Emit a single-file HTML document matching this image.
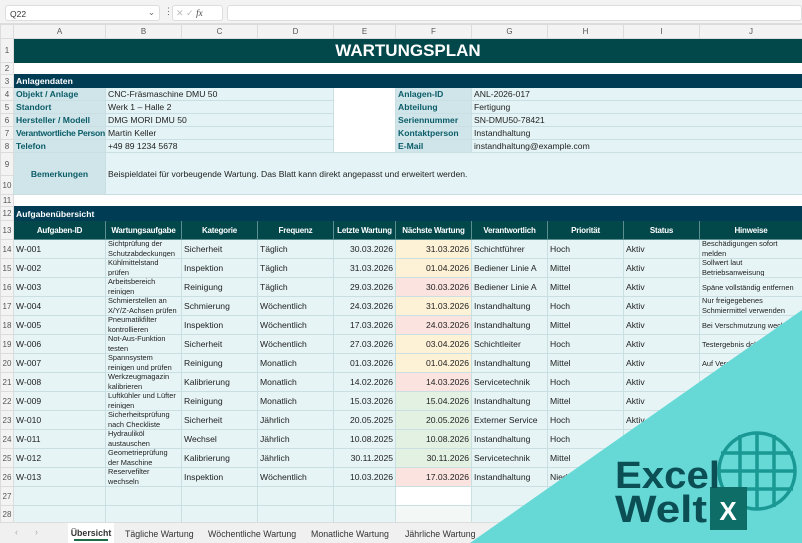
<!DOCTYPE html>
<html><head><meta charset="utf-8"><style>
*{margin:0;padding:0;box-sizing:border-box}
body{width:802px;height:543px;overflow:hidden;background:#fff;font-family:"Liberation Sans",sans-serif;position:relative}
#fb{position:absolute;left:0;top:0;width:802px;height:24px;background:#f3f3f3;border-bottom:1px solid #ddd}
table{position:absolute;left:0;top:24px;border-collapse:collapse;table-layout:fixed;width:802px}
td{border:1px solid #c9dfe2;font-size:8.6px;color:#222;padding:0 2px;white-space:nowrap;overflow:hidden;vertical-align:middle}
td.rh{background:#f3f3f3;color:#555;font-size:8px;text-align:center;border-color:#dcdcdc;padding:0}
tr.ch td{background:#f3f3f3;color:#555;font-size:8px;text-align:center;border-color:#dcdcdc}
.lb{background:#cfe5e9;color:#0b5c68;font-weight:bold}
.vl{background:#e4f3f5}
.hd{background:#02474a;color:#fff;font-weight:bold;text-align:center;border-color:#5a8e90;font-size:8px;letter-spacing:-0.2px}
.d{background:#e6f4f5}
.r{text-align:right}
.y{background:#fdf1d6}.p{background:#fbe3df}.g{background:#e3f1e3}
.two div{font-size:7.4px;line-height:10px;height:18px;overflow:hidden;white-space:normal;margin-top:-2px}
.sm{font-size:7.4px}
</style></head><body>
<div id="fb">
<div style="position:absolute;left:5px;top:5px;width:155px;height:16px;background:#fff;border:1px solid #ddd;border-radius:3px;font-size:8.5px;padding:3px 4px;color:#333">Q22<span style="position:absolute;right:4px;top:1px;color:#666">⌄</span></div>
<div style="position:absolute;left:164px;top:6px;color:#666;font-size:9px">⋮</div>
<div style="position:absolute;left:172px;top:5px;width:51px;height:16px;background:#fff;border:1px solid #ddd;border-radius:3px;font-size:9px;color:#bbb;padding:2px 3px">✕ ✓ <i style="color:#444;font-family:'Liberation Serif',serif">fx</i></div>
<div style="position:absolute;left:227px;top:5px;width:575px;height:16px;background:#fff;border:1px solid #ddd;border-radius:3px"></div>
</div>
<table>
<colgroup><col style="width:13px"><col style="width:92px"><col style="width:76px"><col style="width:76px"><col style="width:76px"><col style="width:62px"><col style="width:76px"><col style="width:76px"><col style="width:76px"><col style="width:76px"><col style="width:103px"></colgroup>
<tr class="ch" style="height:14px"><td></td><td>A</td><td>B</td><td>C</td><td>D</td><td>E</td><td>F</td><td>G</td><td>H</td><td>I</td><td>J</td></tr>
<tr style="height:24px"><td class="rh">1</td><td colspan="10" style="background:#02474a;color:#fff;font-weight:bold;font-size:17px;text-align:center;border-color:#02474a">WARTUNGSPLAN</td></tr>
<tr style="height:12px"><td class="rh">2</td><td colspan="10" style="border:none"></td></tr>
<tr style="height:13px"><td class="rh">3</td><td colspan="10" style="background:#003d55;color:#fff;font-weight:bold;border-color:#003d55">Anlagendaten</td></tr>
<tr style="height:13px"><td class="rh">4</td><td class="lb">Objekt / Anlage</td><td class="vl" colspan="3">CNC-Fräsmaschine DMU 50</td><td rowspan="5" style="background:#fff"></td><td class="lb">Anlagen-ID</td><td class="vl" colspan="4">ANL-2026-017</td></tr>
<tr style="height:13px"><td class="rh">5</td><td class="lb">Standort</td><td class="vl" colspan="3">Werk 1 – Halle 2</td><td class="lb">Abteilung</td><td class="vl" colspan="4">Fertigung</td></tr>
<tr style="height:13px"><td class="rh">6</td><td class="lb">Hersteller / Modell</td><td class="vl" colspan="3">DMG MORI DMU 50</td><td class="lb">Seriennummer</td><td class="vl" colspan="4">SN-DMU50-78421</td></tr>
<tr style="height:13px"><td class="rh">7</td><td class="lb" style="letter-spacing:-0.3px">Verantwortliche Person</td><td class="vl" colspan="3">Martin Keller</td><td class="lb">Kontaktperson</td><td class="vl" colspan="4">Instandhaltung</td></tr>
<tr style="height:13px"><td class="rh">8</td><td class="lb">Telefon</td><td class="vl" colspan="3">+49 89 1234 5678</td><td class="lb">E-Mail</td><td class="vl" colspan="4">instandhaltung@example.com</td></tr>
<tr style="height:23px"><td class="rh">9</td><td class="lb" rowspan="2" style="text-align:center">Bemerkungen</td><td class="vl" colspan="9" rowspan="2">Beispieldatei für vorbeugende Wartung. Das Blatt kann direkt angepasst und erweitert werden.</td></tr>
<tr style="height:19px"><td class="rh">10</td></tr>
<tr style="height:12px"><td class="rh">11</td><td colspan="10" style="border:none"></td></tr>
<tr style="height:14px"><td class="rh">12</td><td colspan="10" style="background:#003d55;color:#fff;font-weight:bold;border-color:#003d55">Aufgabenübersicht</td></tr>
<tr style="height:19px"><td class="rh">13</td><td class="hd">Aufgaben-ID</td><td class="hd">Wartungsaufgabe</td><td class="hd">Kategorie</td><td class="hd">Frequenz</td><td class="hd">Letzte Wartung</td><td class="hd">Nächste Wartung</td><td class="hd">Verantwortlich</td><td class="hd">Priorität</td><td class="hd">Status</td><td class="hd">Hinweise</td></tr>
<tr style="height:19px"><td class="rh">14</td><td class="d">W-001</td><td class="d two"><div>Sichtprüfung der Schutzabdeckungen</div></td><td class="d">Sicherheit</td><td class="d">Täglich</td><td class="d r">30.03.2026</td><td class="y r">31.03.2026</td><td class="d">Schichtführer</td><td class="d">Hoch</td><td class="d">Aktiv</td><td class="d two"><div>Beschädigungen sofort melden</div></td></tr>
<tr style="height:19px"><td class="rh">15</td><td class="d">W-002</td><td class="d two"><div>Kühlmittelstand prüfen</div></td><td class="d">Inspektion</td><td class="d">Täglich</td><td class="d r">31.03.2026</td><td class="y r">01.04.2026</td><td class="d">Bediener Linie A</td><td class="d">Mittel</td><td class="d">Aktiv</td><td class="d two"><div>Sollwert laut Betriebsanweisung</div></td></tr>
<tr style="height:19px"><td class="rh">16</td><td class="d">W-003</td><td class="d two"><div>Arbeitsbereich reinigen</div></td><td class="d">Reinigung</td><td class="d">Täglich</td><td class="d r">29.03.2026</td><td class="p r">30.03.2026</td><td class="d">Bediener Linie A</td><td class="d">Mittel</td><td class="d">Aktiv</td><td class="d sm">Späne vollständig entfernen</td></tr>
<tr style="height:19px"><td class="rh">17</td><td class="d">W-004</td><td class="d two"><div>Schmierstellen an X/Y/Z-Achsen prüfen</div></td><td class="d">Schmierung</td><td class="d">Wöchentlich</td><td class="d r">24.03.2026</td><td class="y r">31.03.2026</td><td class="d">Instandhaltung</td><td class="d">Hoch</td><td class="d">Aktiv</td><td class="d two"><div>Nur freigegebenes Schmiermittel verwenden</div></td></tr>
<tr style="height:19px"><td class="rh">18</td><td class="d">W-005</td><td class="d two"><div>Pneumatikfilter kontrollieren</div></td><td class="d">Inspektion</td><td class="d">Wöchentlich</td><td class="d r">17.03.2026</td><td class="p r">24.03.2026</td><td class="d">Instandhaltung</td><td class="d">Mittel</td><td class="d">Aktiv</td><td class="d sm">Bei Verschmutzung wechseln</td></tr>
<tr style="height:19px"><td class="rh">19</td><td class="d">W-006</td><td class="d two"><div>Not-Aus-Funktion testen</div></td><td class="d">Sicherheit</td><td class="d">Wöchentlich</td><td class="d r">27.03.2026</td><td class="y r">03.04.2026</td><td class="d">Schichtleiter</td><td class="d">Hoch</td><td class="d">Aktiv</td><td class="d sm">Testergebnis dokumentieren</td></tr>
<tr style="height:19px"><td class="rh">20</td><td class="d">W-007</td><td class="d two"><div>Spannsystem reinigen und prüfen</div></td><td class="d">Reinigung</td><td class="d">Monatlich</td><td class="d r">01.03.2026</td><td class="y r">01.04.2026</td><td class="d">Instandhaltung</td><td class="d">Mittel</td><td class="d">Aktiv</td><td class="d sm">Auf Verschleiß prüfen</td></tr>
<tr style="height:19px"><td class="rh">21</td><td class="d">W-008</td><td class="d two"><div>Werkzeugmagazin kalibrieren</div></td><td class="d">Kalibrierung</td><td class="d">Monatlich</td><td class="d r">14.02.2026</td><td class="p r">14.03.2026</td><td class="d">Servicetechnik</td><td class="d">Hoch</td><td class="d">Aktiv</td><td class="d sm">Protokoll</td></tr>
<tr style="height:19px"><td class="rh">22</td><td class="d">W-009</td><td class="d two"><div>Luftkühler und Lüfter reinigen</div></td><td class="d">Reinigung</td><td class="d">Monatlich</td><td class="d r">15.03.2026</td><td class="g r">15.04.2026</td><td class="d">Instandhaltung</td><td class="d">Mittel</td><td class="d">Aktiv</td><td class="d"></td></tr>
<tr style="height:19px"><td class="rh">23</td><td class="d">W-010</td><td class="d two"><div>Sicherheitsprüfung nach Checkliste</div></td><td class="d">Sicherheit</td><td class="d">Jährlich</td><td class="d r">20.05.2025</td><td class="g r">20.05.2026</td><td class="d">Externer Service</td><td class="d">Hoch</td><td class="d">Aktiv</td><td class="d"></td></tr>
<tr style="height:19px"><td class="rh">24</td><td class="d">W-011</td><td class="d two"><div>Hydrauliköl austauschen</div></td><td class="d">Wechsel</td><td class="d">Jährlich</td><td class="d r">10.08.2025</td><td class="g r">10.08.2026</td><td class="d">Instandhaltung</td><td class="d">Hoch</td><td class="d"></td><td class="d"></td></tr>
<tr style="height:19px"><td class="rh">25</td><td class="d">W-012</td><td class="d two"><div>Geometrieprüfung der Maschine</div></td><td class="d">Kalibrierung</td><td class="d">Jährlich</td><td class="d r">30.11.2025</td><td class="g r">30.11.2026</td><td class="d">Servicetechnik</td><td class="d">Mittel</td><td class="d"></td><td class="d"></td></tr>
<tr style="height:19px"><td class="rh">26</td><td class="d">W-013</td><td class="d two"><div>Reservefilter wechseln</div></td><td class="d">Inspektion</td><td class="d">Wöchentlich</td><td class="d r">10.03.2026</td><td class="p r">17.03.2026</td><td class="d">Instandhaltung</td><td class="d">Niedrig</td><td class="d"></td><td class="d"></td></tr>
<tr style="height:19px"><td class="rh">27</td><td class="d"></td><td class="d"></td><td class="d"></td><td class="d"></td><td class="d"></td><td style="background:#fff"></td><td class="d"></td><td class="d"></td><td class="d"></td><td class="d"></td></tr>
<tr style="height:17px"><td class="rh">28</td><td class="d"></td><td class="d"></td><td class="d"></td><td class="d"></td><td class="d"></td><td style="background:#f3f8f6"></td><td class="d"></td><td class="d"></td><td class="d"></td><td class="d"></td></tr>
</table>
<div style="position:absolute;left:0;top:522px;width:802px;height:21px;background:#f0f0f0;border-top:1px solid #ddd;font-size:8.8px;color:#333">
<span style="position:absolute;left:15px;top:4px;color:#aaa">‹</span><span style="position:absolute;left:35px;top:4px;color:#aaa">›</span>
<div style="position:absolute;left:68px;top:0;width:46px;height:20px;background:#fff;font-weight:bold;text-align:center;padding-top:5px">Übersicht<div style="position:absolute;left:6px;right:6px;bottom:2px;height:2px;background:#1e6b4a"></div></div>
<span style="position:absolute;left:125px;top:6px">Tägliche Wartung</span>
<span style="position:absolute;left:208px;top:6px">Wöchentliche Wartung</span>
<span style="position:absolute;left:311px;top:6px">Monatliche Wartung</span>
<span style="position:absolute;left:405px;top:6px">Jährliche Wartung</span>
</div>
<svg style="position:absolute;left:0;top:0" width="802" height="543">
<polygon points="802,310 802,543 470,543" fill="#66d9d7"/>
<g fill="none" stroke="#1a9994" stroke-width="3.5">
<circle cx="757" cy="471" r="38"/>
<line x1="740" y1="435" x2="740" y2="507"/><line x1="757" y1="433" x2="757" y2="509"/><line x1="774" y1="435" x2="774" y2="507"/>
<line x1="721" y1="453" x2="793" y2="453"/><line x1="719" y1="471" x2="795" y2="471"/><line x1="721" y1="489" x2="793" y2="489"/>
</g>
<rect x="710" y="487" width="37" height="43" fill="#0e6d67"/>
<text x="728" y="520" font-family="Liberation Sans" font-weight="bold" font-size="26" fill="#fff" text-anchor="middle">X</text>
<text x="615" y="488" font-family="Liberation Sans" font-weight="bold" font-size="38" fill="#0b4f55" textLength="105" lengthAdjust="spacingAndGlyphs">Excel</text>
<text x="615" y="522" font-family="Liberation Sans" font-weight="bold" font-size="38" fill="#0b4f55" textLength="92" lengthAdjust="spacingAndGlyphs">Welt</text>
</svg>
</body></html>
